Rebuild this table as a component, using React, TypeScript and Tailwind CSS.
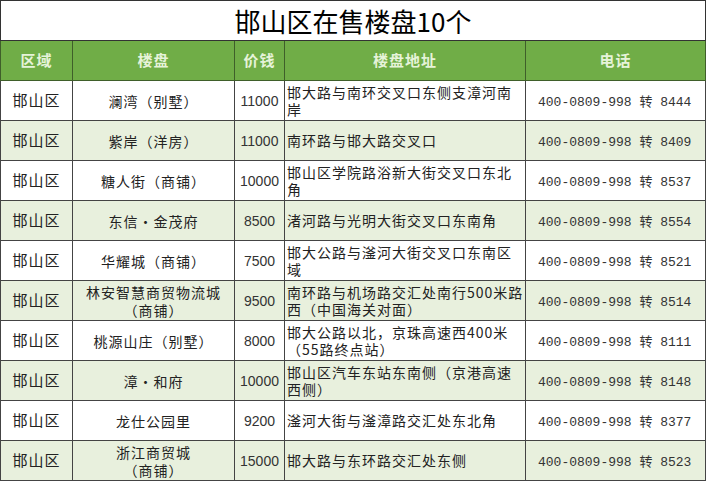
const rows = [
  { name: ['澜湾（别墅）'], price: '11000', addr: ['邯大路与南环交叉口东侧支漳河南', '岸'], ext: '8444' },
  { name: ['紫岸（洋房）'], price: '11000', addr: ['南环路与邯大路交叉口'], ext: '8409' },
  { name: ['糖人街（商铺）'], price: '10000', addr: ['邯山区学院路浴新大街交叉口东北', '角'], ext: '8537' },
  { name: ['东信·金茂府'], price: '8500', addr: ['渚河路与光明大街交叉口东南角'], ext: '8554' },
  { name: ['华耀城（商铺）'], price: '7500', addr: ['邯大公路与滏河大街交叉口东南区', '域'], ext: '8521' },
  { name: ['林安智慧商贸物流城', '（商铺）'], price: '9500', addr: ['南环路与机场路交汇处南行500米路', '西（中国海关对面）'], ext: '8514' },
  { name: ['桃源山庄（别墅）'], price: '8000', addr: ['邯大公路以北，京珠高速西400米', '（55路终点站）'], ext: '8111' },
  { name: ['漳·和府'], price: '10000', addr: ['邯山区汽车东站东南侧（京港高速', '西侧）'], ext: '8148' },
  { name: ['龙仕公园里'], price: '9200', addr: ['滏河大街与滏漳路交汇处东北角'], ext: '8377' },
  { name: ['浙江商贸城', '（商铺）'], price: '15000', addr: ['邯大路与东环路交汇处东侧'], ext: '8523' },
]

const cjk = { fontFamily: '"Noto Sans CJK SC", "Liberation Sans", sans-serif' }

export default function App() {
  return (
    <div className="w-[706px] h-[481px] bg-white overflow-hidden" style={cjk}>
      <table className="w-[706px] table-fixed border-collapse border border-[#333]">
        <colgroup>
          <col className="w-[72px]" />
          <col className="w-[162px]" />
          <col className="w-[50px]" />
          <col className="w-[241px]" />
          <col />
        </colgroup>
        <thead>
          <tr className="h-[40px]">
            <th colSpan={5} className="border border-[#333] bg-white text-[26px] font-normal text-black leading-none">
              邯山区在售楼盘10个
            </th>
          </tr>
          <tr className="h-[40px] bg-[#70ad47]">
            {['区域', '楼盘', '价钱', '楼盘地址', '电话'].map((h) => (
              <th key={h} className="border border-[#3f5f2a] text-[15px] font-bold text-[#e6f3d9] tracking-[1px]">
                {h}
              </th>
            ))}
          </tr>
        </thead>
        <tbody>
          {rows.map((r, i) => (
            <tr key={i} className={`h-[40px] ${i % 2 === 1 ? 'bg-[#e8f0dd]' : 'bg-white'}`}>
              <td className="border border-[#444] text-center text-[15px] text-[#222] tracking-[1px]">邯山区</td>
              <td className="border border-[#444] text-center text-[14px] leading-[18px] text-[#222] tracking-[1px]">
                {r.name.map((l) => (
                  <div key={l} className="whitespace-nowrap">{l}</div>
                ))}
              </td>
              <td className="border border-[#444] text-center text-[14px] text-[#333]">
                <span style={{ fontFamily: '"Liberation Sans", sans-serif' }}>{r.price}</span>
              </td>
              <td className="border border-[#444] pl-[2px] text-[14px] leading-[17px] text-[#222] tracking-[1px]">
                {r.addr.map((l) => (
                  <div key={l} className="whitespace-nowrap">{l}</div>
                ))}
              </td>
              <td className="border border-[#444] pl-[12px] pt-[4px] text-[13px] text-[#333] whitespace-nowrap" style={{ fontFamily: '"Liberation Mono", "Noto Sans CJK SC", monospace' }}>
                400-0809-998 转 {r.ext}
              </td>
            </tr>
          ))}
        </tbody>
      </table>
    </div>
  )
}
